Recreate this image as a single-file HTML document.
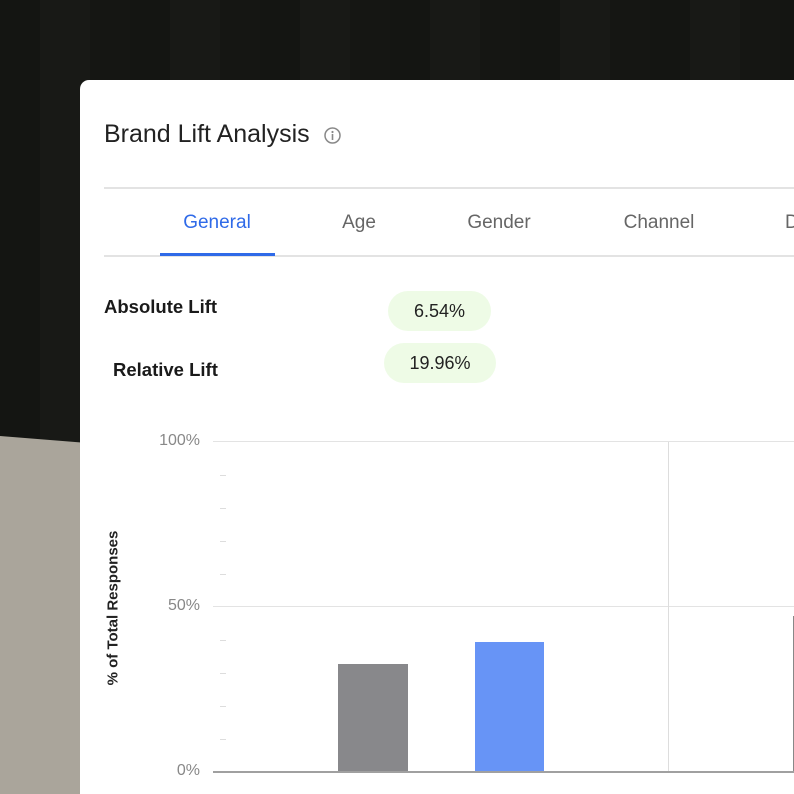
<!DOCTYPE html>
<html><head><style>
html,body{margin:0;width:794px;height:794px;overflow:hidden}
body{position:relative;font-family:"Liberation Sans",Arial,sans-serif;background:#161714}
.bg{position:absolute;inset:0;background:repeating-linear-gradient(90deg,#141512 0 40px,#181916 40px 90px,#151613 90px 130px)}
.beige{position:absolute;left:0;top:0;width:794px;height:794px;background:#aaa59b;clip-path:polygon(0 436px,100px 444px,100px 794px,0 794px)}
.card{position:absolute;left:80px;top:80px;width:714px;height:714px;background:#fff;border-radius:9px 0 0 0}
.a{position:absolute;white-space:nowrap}
.hl{position:absolute;height:2px;background:#e3e3e3;left:104px;right:0}
.tab{position:absolute;top:212px;font-size:19px;color:#666;transform:translateX(-50%)}
.pill{position:absolute;background:#eefbe6;border-radius:20px;font-size:18px;color:#222;text-align:center;line-height:40px;height:40px}
.lbl{position:absolute;font-size:18.5px;font-weight:bold;color:#1a1a1a}
.yl{position:absolute;font-size:16px;color:#888;text-align:right;width:50px;left:150px}
.tick{position:absolute;left:220px;width:6px;height:1px;background:#ddd}
</style></head><body>
<div class="bg"></div><div class="beige"></div>
<div class="card"></div>
<div class="a" style="left:104px;top:120px;font-size:25px;color:#222">Brand Lift Analysis</div>
<svg class="a" style="left:323px;top:126px" width="19" height="19" viewBox="0 0 19 19"><circle cx="9.5" cy="9.5" r="7.5" fill="none" stroke="#888" stroke-width="1.5"/><circle cx="9.5" cy="6" r="1.1" fill="#888"/><rect x="8.7" y="8" width="1.6" height="6" fill="#888"/></svg>
<div class="hl" style="top:187px"></div>
<div class="tab" style="left:217px;color:#2f6ae8">General</div>
<div class="tab" style="left:359px">Age</div>
<div class="tab" style="left:499px">Gender</div>
<div class="tab" style="left:659px">Channel</div>
<div class="a" style="left:785px;top:212px;font-size:19px;color:#666">D</div>
<div class="hl" style="top:255px"></div>
<div class="a" style="left:160px;top:253px;width:115px;height:3px;background:#2f6ae8"></div>
<div class="lbl" style="left:104px;top:296px">Absolute Lift</div>
<div class="lbl" style="left:113px;top:359px">Relative Lift</div>
<div class="pill" style="left:388px;top:291px;width:103px">6.54%</div>
<div class="pill" style="left:384px;top:343px;width:112px">19.96%</div>
<div class="yl" style="top:432px">100%</div>
<div class="yl" style="top:597px">50%</div>
<div class="yl" style="top:762px">0%</div>
<div class="a" style="left:213px;top:441px;width:581px;height:1px;background:#e3e3e3"></div>
<div class="a" style="left:213px;top:606px;width:581px;height:1px;background:#e3e3e3"></div>
<div class="a" style="left:668px;top:442px;width:1px;height:330px;background:#ddd"></div>
<div class="tick" style="top:475px"></div><div class="tick" style="top:508px"></div><div class="tick" style="top:541px"></div><div class="tick" style="top:574px"></div>
<div class="tick" style="top:640px"></div><div class="tick" style="top:673px"></div><div class="tick" style="top:706px"></div><div class="tick" style="top:739px"></div>
<div class="a" style="left:338px;top:664px;width:70px;height:108px;background:#88888b"></div>
<div class="a" style="left:475px;top:642px;width:69px;height:130px;background:#6794f6"></div>
<div class="a" style="left:793px;top:616px;width:1px;height:156px;background:#888"></div>
<div class="a" style="left:213px;top:771px;width:581px;height:2px;background:#a0a0a0"></div>
<div class="a" style="left:113px;top:608px;font-size:15px;font-weight:bold;color:#222;transform:translate(-50%,-50%) rotate(-90deg)">% of Total Responses</div>
</body></html>
